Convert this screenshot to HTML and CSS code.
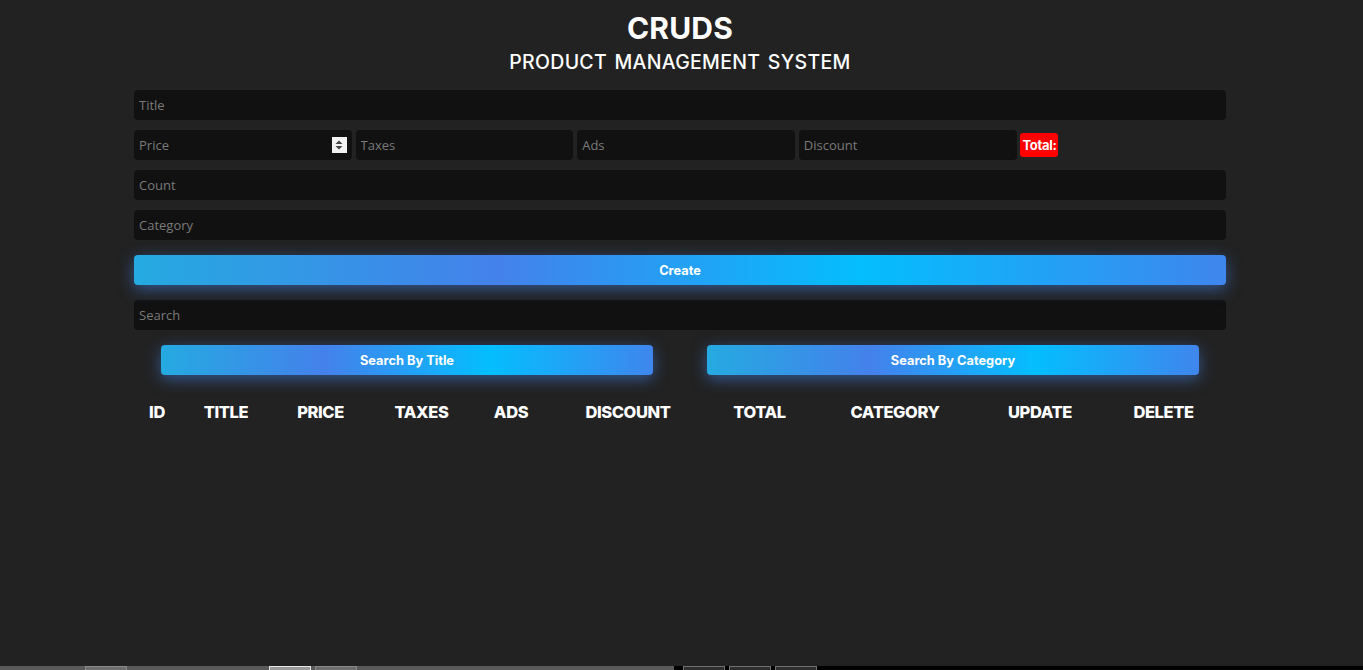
FILE: index.html
```html
<!DOCTYPE html>
<html lang="en">
<head>
<meta charset="UTF-8">
<title>CRUDS</title>
<link rel="stylesheet" href="styles.css">
</head>
<body>
<div class="crud">
  <div class="head">
    <h1>CRUDS</h1>
    <p>PRODUCT MANAGEMENT SYSTEM</p>
  </div>
  <div class="inputs">
    <input type="text" class="field" placeholder="Title">
    <div class="price">
      <div class="num-wrap">
        <input type="number" class="field small" placeholder="Price">
        <span class="spinner">
          <svg width="8" height="10" viewBox="0 0 8 10"><path d="M4 0.5 L7.5 4 L0.5 4 Z" fill="#444"/><path d="M4 9.5 L7.5 6 L0.5 6 Z" fill="#444"/></svg>
        </span>
      </div>
      <input type="number" class="field small" placeholder="Taxes">
      <input type="number" class="field small" placeholder="Ads">
      <input type="number" class="field small" placeholder="Discount">
      <small class="total">Total:</small>
    </div>
    <input type="number" class="field" placeholder="Count">
    <input type="text" class="field" placeholder="Category">
    <button class="btn create">Create</button>
  </div>
  <div class="output">
    <input type="text" class="field search" placeholder="Search">
    <div class="btn-search">
      <button class="btn half">Search By Title</button>
      <button class="btn half">Search By Category</button>
    </div>
    <table>
      <colgroup>
        <col class="c-id"><col class="c-title"><col class="c-price"><col class="c-taxes"><col class="c-ads">
        <col class="c-discount"><col class="c-total"><col class="c-category"><col class="c-update"><col class="c-delete">
      </colgroup>
      <thead>
        <tr>
          <th>ID</th><th>TITLE</th><th>PRICE</th><th>TAXES</th><th>ADS</th>
          <th>DISCOUNT</th><th>TOTAL</th><th>CATEGORY</th><th>UPDATE</th><th>DELETE</th>
        </tr>
      </thead>
      <tbody></tbody>
    </table>
  </div>
</div>
<div class="strip">
  <div class="strip-left">
    <span class="tab t1"></span>
    <span class="tab t2"></span>
    <span class="tab t3"></span>
  </div>
  <div class="strip-right">
    <span class="tab dark"></span>
    <span class="tab dark"></span>
    <span class="tab dark"></span>
  </div>
</div>
</body>
</html>
```

FILE: styles.css
```css
* {
  box-sizing: border-box;
}

html, body {
  height: 100%;
}

body {
  margin: 0;
  background: #222222;
  color: #ffffff;
  font-family: "Open Sans", "Noto Sans", sans-serif;
  display: flex;
  flex-direction: column;
  min-height: 670px;
  overflow: hidden;
}

.crud {
  width: 1092px;
  margin-left: 134px;
  padding-top: 10px;
}

.head {
  text-align: center;
}

.head h1 {
  margin: 0;
  font-family: "Inter", sans-serif;
  font-weight: 700;
  font-size: 30px;
  line-height: 36px;
  letter-spacing: 0.2px;
}

.head p {
  margin: 4px 0 0;
  font-family: "Inter", sans-serif;
  font-weight: 500;
  font-size: 19.5px;
  line-height: 24px;
  letter-spacing: 0.3px;
  word-spacing: 2px;
}

.inputs {
  margin-top: 16px;
  display: flex;
  flex-direction: column;
}

.field {
  display: block;
  width: 100%;
  height: 30px;
  border: none;
  outline: none;
  border-radius: 4px;
  background: #111111;
  color: #ffffff;
  padding: 0 5px;
  margin: 0 0 10px;
  font-family: "Open Sans", sans-serif;
  font-size: 13px;
  -moz-appearance: textfield;
}

.field::-webkit-outer-spin-button,
.field::-webkit-inner-spin-button {
  -webkit-appearance: none;
  margin: 0;
}

.field::placeholder {
  color: #7a7a7a;
}

.price {
  display: flex;
  align-items: flex-start;
  gap: 3.8px;
}

.field.small {
  width: 217.8px;
  flex: none;
}

.num-wrap {
  position: relative;
  flex: none;
}

.spinner {
  position: absolute;
  right: 5px;
  top: 7px;
  width: 15px;
  height: 16px;
  background: #f2f2f2;
  display: flex;
  align-items: center;
  justify-content: center;
}

.total {
  margin-top: 3px;
  background: #ff0000;
  color: #ffffff;
  font-family: "Inter", sans-serif;
  font-weight: 700;
  font-size: 13px;
  line-height: 24px;
  padding: 0 2px;
  border-radius: 3px;
  letter-spacing: -0.3px;
}

.btn {
  display: block;
  height: 30px;
  border: none;
  border-radius: 4px;
  color: #ffffff;
  font-family: "Inter", sans-serif;
  font-weight: 700;
  font-size: 12.8px;
  cursor: pointer;
  background-image: linear-gradient(to right, #25aae1, #4481eb, #04befe, #3f86ed);
  box-shadow: 0 4px 15px 0 rgba(65, 132, 234, 0.55);
}

.create {
  width: 100%;
  margin-top: 5px;
}

.output {
  margin-top: 15px;
}

.search {
  margin-bottom: 15px;
}

.btn-search {
  display: flex;
  justify-content: space-around;
}

.btn.half {
  width: 45%;
}

table {
  width: 100%;
  margin-top: 20px;
  border-collapse: collapse;
  table-layout: fixed;
}

th {
  font-family: "Inter", sans-serif;
  font-weight: 800;
  font-size: 16.5px;
  line-height: 34px;
  text-align: center;
  padding: 0;
  letter-spacing: -0.4px;
}

.c-id { width: 46px; }
.c-title { width: 92px; }
.c-price { width: 97px; }
.c-taxes { width: 105px; }
.c-ads { width: 74px; }
.c-discount { width: 160px; }
.c-total { width: 103px; }
.c-category { width: 168px; }
.c-update { width: 122px; }
.c-delete { width: 125px; }

.strip {
  margin-top: auto;
  height: 4px;
  display: flex;
  overflow: hidden;
  flex: none;
}

.strip-left {
  width: 674px;
  background: #5a5a5a;
  display: flex;
  padding-left: 85px;
}

.strip-right {
  flex: 1;
  background: #000000;
  display: flex;
  padding-left: 9px;
  gap: 4px;
}

.tab {
  width: 42px;
  height: 20px;
  border: 1px solid #8a8a8a;
  background: #6e6e6e;
  flex: none;
}

.t2 {
  margin-left: 142px;
  border-color: #e6e6e6;
  background: #9a9a9a;
}

.t3 {
  margin-left: 4px;
}

.tab.dark {
  background: #2e2e2e;
  border-color: #707070;
}
```
